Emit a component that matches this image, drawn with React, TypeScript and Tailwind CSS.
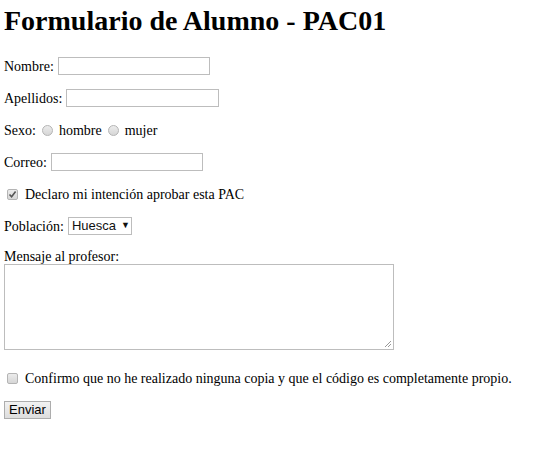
import React from "react";

const serif = { fontFamily: '"Liberation Serif", "Times New Roman", serif' };
const sans = { fontFamily: '"Liberation Sans", Arial, sans-serif' };

function TextBox({ w }: { w: number }) {
  return (
    <span
      className="inline-block h-[18px] border border-[#bdbdbd] bg-white"
      style={{ width: w }}
    />
  );
}

function Radio() {
  return (
    <span className="inline-block w-[11px] h-[11px] rounded-full border border-[#b4b4b4] bg-gradient-to-b from-[#ececec] to-[#d6d6d6]" />
  );
}

function Check({ checked }: { checked?: boolean }) {
  return (
    <span className="relative inline-flex items-center justify-center w-[11px] h-[11px] rounded-[2px] border border-[#b4b4b4] bg-gradient-to-b from-[#ececec] to-[#d6d6d6]">
      {checked && (
        <svg width="9" height="9" viewBox="0 0 9 9" className="absolute">
          <path d="M1.5 4.5 L3.6 6.8 L7.6 1.6" fill="none" stroke="#555" strokeWidth="1.6" />
        </svg>
      )}
    </span>
  );
}

export default function App() {
  return (
    <div className="w-[557px] h-[449px] bg-white text-black pl-[4px]" style={serif}>
      <h1 className="text-[28px] font-bold leading-[30px] pt-[6px] h-[57px]">
        Formulario de Alumno - PAC01
      </h1>
      <div className="flex flex-col gap-[14px] text-[14px]">
        <div className="flex items-center h-[18px]">
          <span>Nombre:</span>
          <span className="ml-[4px] flex"><TextBox w={152} /></span>
        </div>
        <div className="flex items-center h-[18px]">
          <span>Apellidos:</span>
          <span className="ml-[4px] flex"><TextBox w={153} /></span>
        </div>
        <div className="flex items-center h-[18px]">
          <span>Sexo:</span>
          <span className="ml-[6px] mr-[6px] flex"><Radio /></span>
          <span>hombre</span>
          <span className="ml-[6px] mr-[6px] flex"><Radio /></span>
          <span>mujer</span>
        </div>
        <div className="flex items-center h-[18px]">
          <span>Correo:</span>
          <span className="ml-[4px] flex"><TextBox w={152} /></span>
        </div>
        <div className="flex items-center h-[18px]">
          <span className="ml-[3px] mr-[7px] flex"><Check checked /></span>
          <span>Declaro mi intención aprobar esta PAC</span>
        </div>
        <div className="flex items-center h-[18px]">
          <span>Población:</span>
          <span
            className="ml-[4px] flex items-center h-[18px] w-[64px] border border-[#bdbdbd] bg-white pl-[3px] text-[13px] text-[#111]"
            style={sans}
          >
            Huesca
            <span className="ml-[5px] text-[9px]">▼</span>
          </span>
        </div>
        <div className="flex flex-col">
          <span className="leading-[15px] h-[15px]">Mensaje al profesor:</span>
          <span className="relative block w-[390px] h-[86px] border border-[#bdbdbd] bg-white">
            <svg width="8" height="8" viewBox="0 0 8 8" className="absolute right-[1px] bottom-[1px]">
              <path d="M7 1 L1 7 M7 4 L4 7" stroke="#999" strokeWidth="1" />
            </svg>
          </span>
        </div>
        <div className="flex items-center h-[18px] mt-[5px]">
          <span className="ml-[3px] mr-[7px] flex"><Check /></span>
          <span>Confirmo que no he realizado ninguna copia y que el código es completamente propio.</span>
        </div>
        <div className="flex">
          <span
            className="inline-flex items-center justify-center h-[18px] w-[47px] border border-[#adadad] bg-gradient-to-b from-[#f2f2f2] to-[#dddddd] text-[13px] text-black"
            style={sans}
          >
            Enviar
          </span>
        </div>
      </div>
    </div>
  );
}
